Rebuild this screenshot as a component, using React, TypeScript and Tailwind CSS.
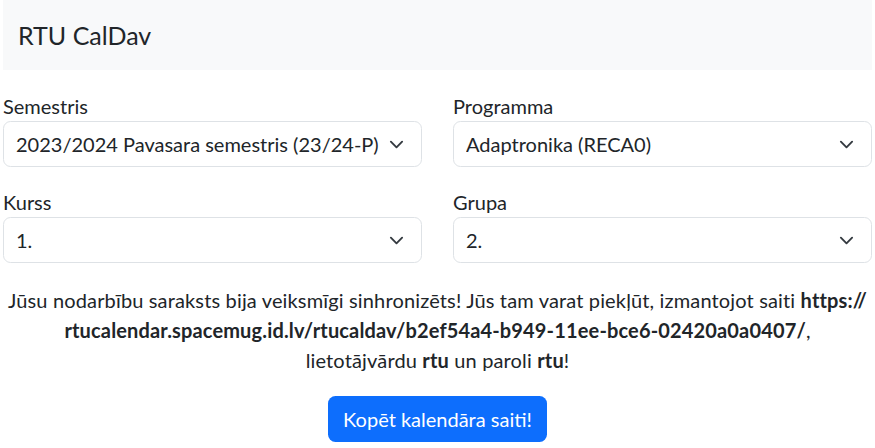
import React from 'react';

interface SelectFieldProps {
  label: string;
  value: string;
}

const Chevron = () => (
  <svg
    className="mr-[17px] h-[15px] w-[15px] shrink-0"
    viewBox="0 0 16 16"
    fill="none"
    stroke="#343a40"
    strokeWidth="2"
    strokeLinecap="round"
    strokeLinejoin="round"
  >
    <path d="m2 5 6 6 6-6" />
  </svg>
);

const SelectField: React.FC<SelectFieldProps> = ({ label, value }) => (
  <div>
    <label className="block h-[30px]">{label}</label>
    <div className="flex h-[46px] items-center justify-between rounded-[7.5px] border border-[#dee2e6] bg-white pl-[12px]">
      <span className="truncate">{value}</span>
      <Chevron />
    </div>
  </div>
);

const App: React.FC = () => {
  return (
    <div className="min-h-screen bg-white px-[3px] font-['Lato','Liberation_Sans',sans-serif] text-[20px] leading-[30px] text-[#212529]">
      <nav className="flex h-[70px] items-center bg-[#f8f9fa] px-[15px]">
        <span className="text-[25px] leading-[37px]">RTU CalDav</span>
      </nav>

      <div className="mt-[21px] grid grid-cols-2 gap-x-[31px] gap-y-[20px]">
        <SelectField label="Semestris" value="2023/2024 Pavasara semestris (23/24-P)" />
        <SelectField label="Programma" value="Adaptronika (RECA0)" />
        <SelectField label="Kurss" value="1." />
        <SelectField label="Grupa" value="2." />
      </div>

      <p className="mt-[22px] text-center tracking-[0.15px]">
        Jūsu nodarbību saraksts bija veiksmīgi sinhronizēts! Jūs tam varat piekļūt, izmantojot saiti{' '}
        <b className="font-bold">
          https://<wbr />rtucalendar.spacemug.id.lv/rtucaldav/b2ef54a4-b949-11ee-bce6-02420a0a0407/
        </b>
        ,<br />
        lietotājvārdu <b className="font-bold">rtu</b> un paroli <b className="font-bold">rtu</b>!
      </p>

      <div className="mt-[21px] flex justify-center">
        <button
          type="button"
          className="h-[46px] rounded-[7.5px] bg-[#0d6efd] px-[15px] text-white"
        >
          Kopēt kalendāra saiti!
        </button>
      </div>
    </div>
  );
};

export default App;
